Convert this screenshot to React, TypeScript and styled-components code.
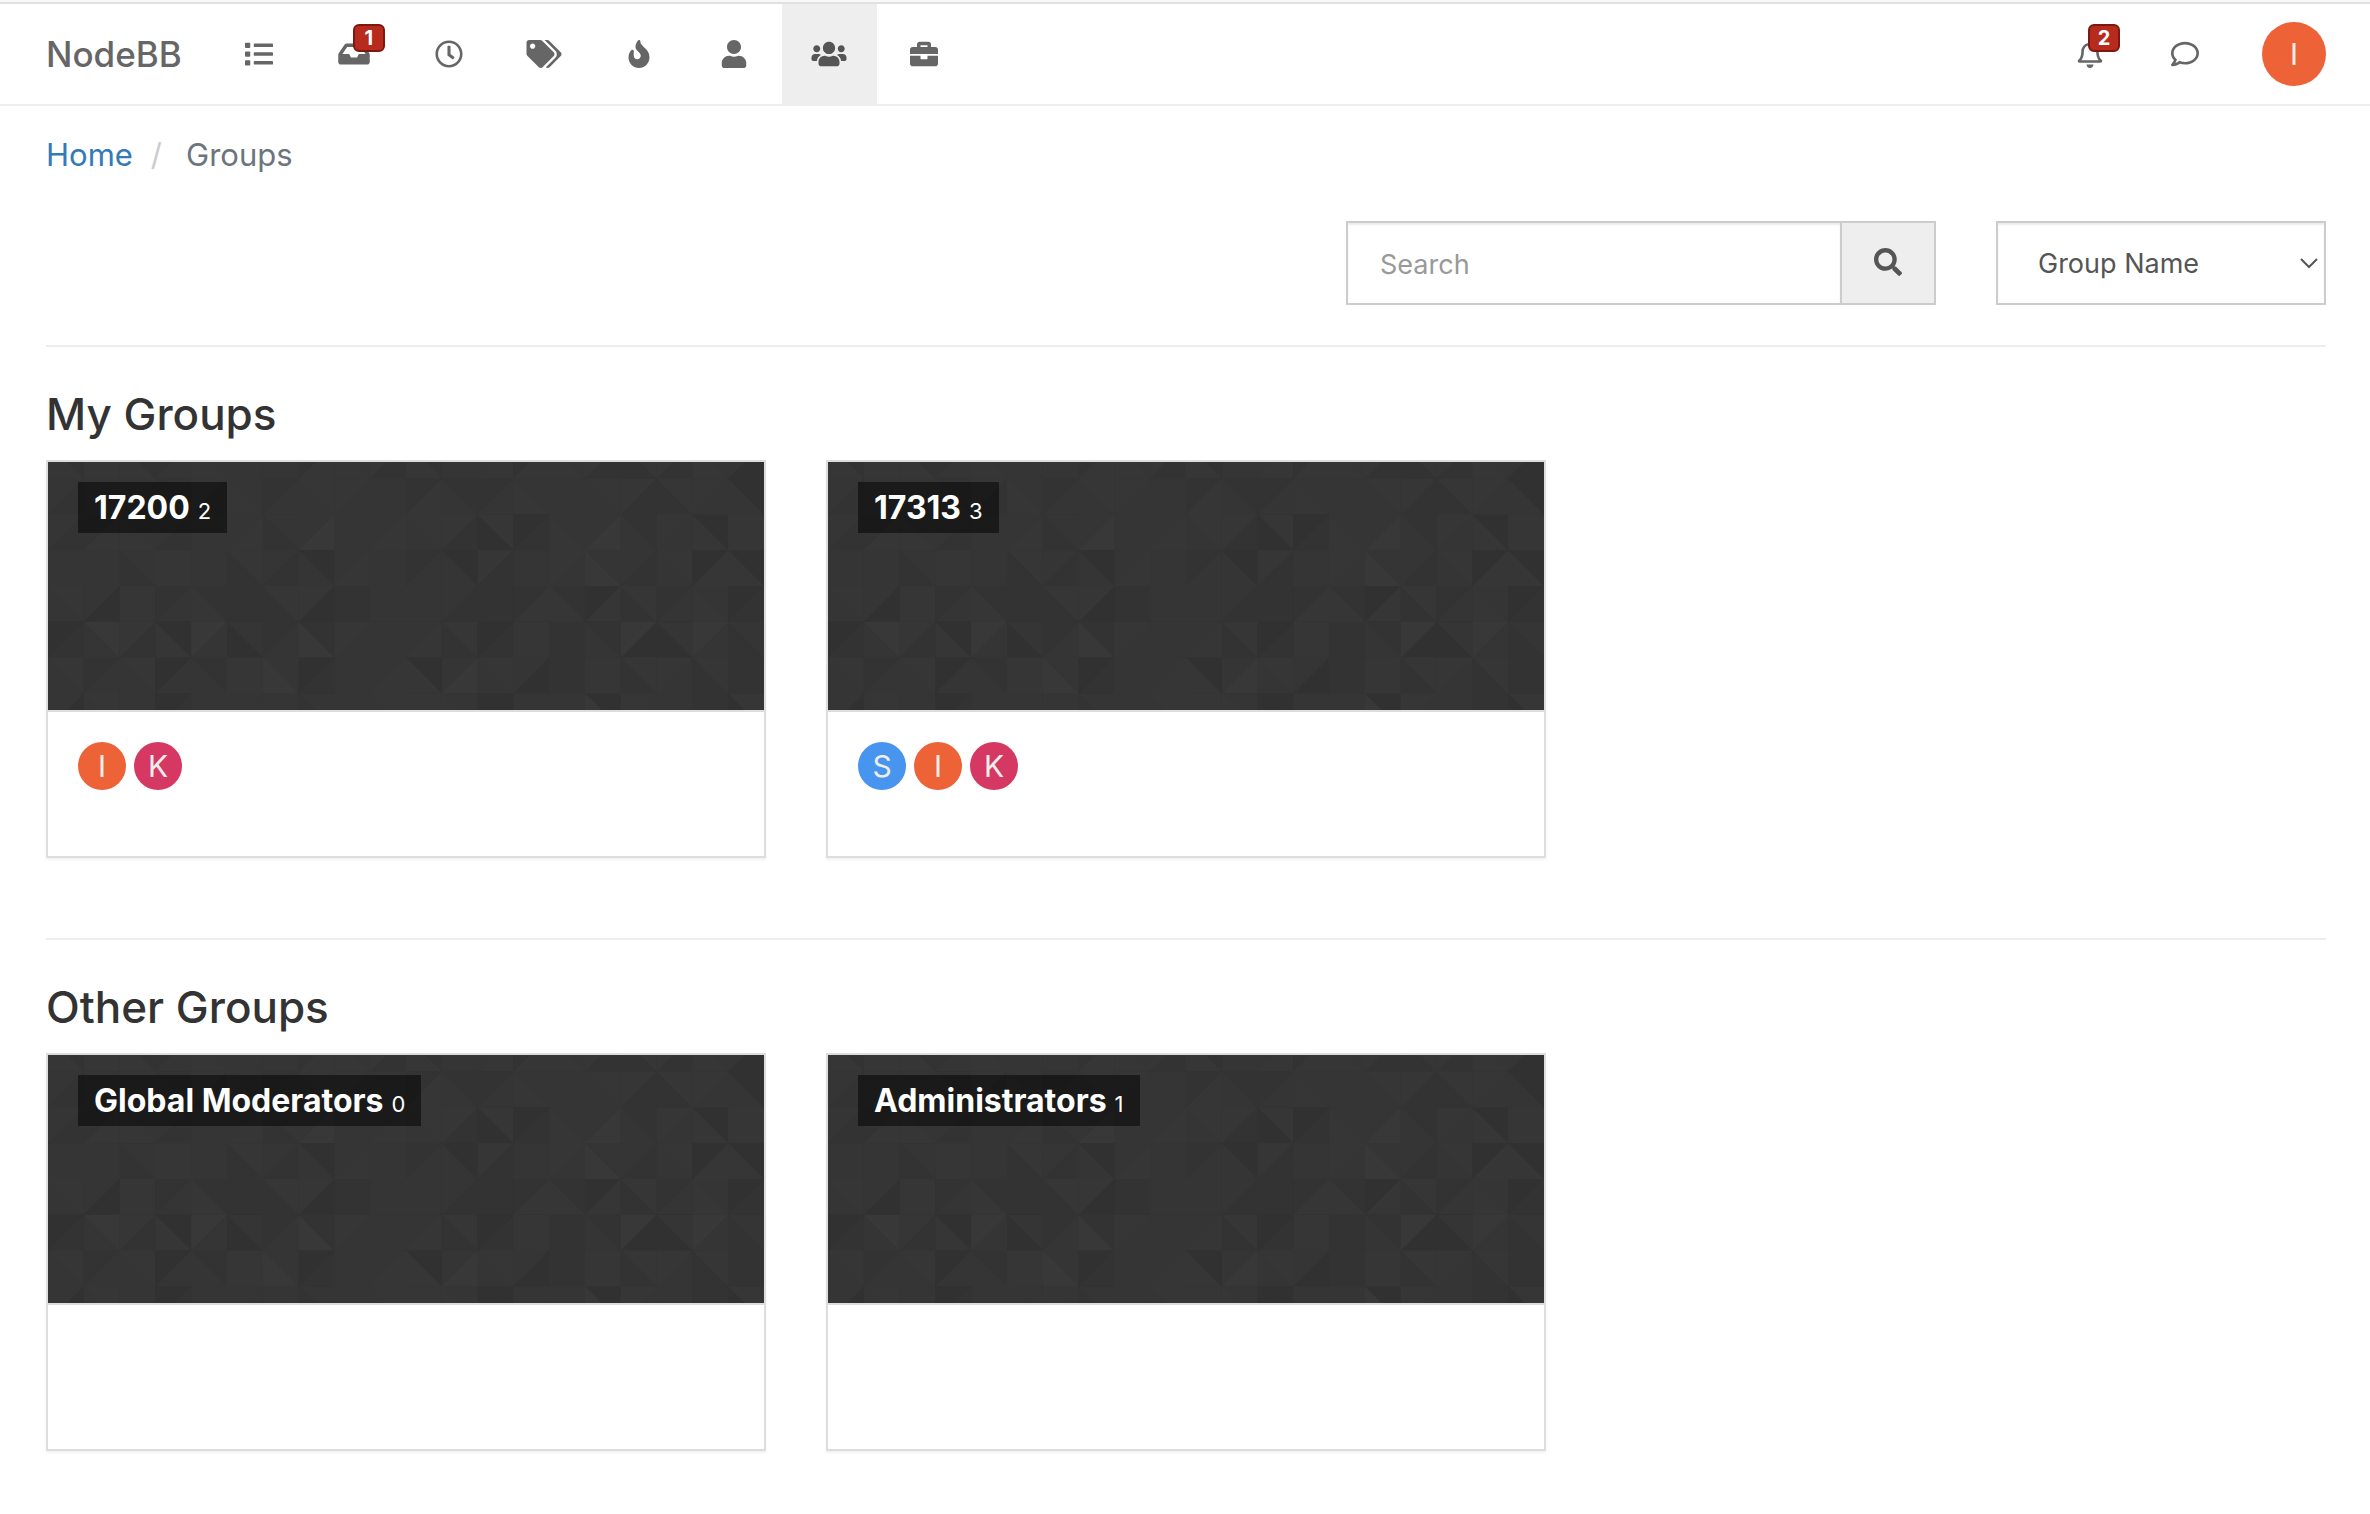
import React from "react";
import styled, { createGlobalStyle } from "styled-components";
import type { IconType } from "react-icons";
import {
  FaBriefcase,
  FaFire,
  FaInbox,
  FaList,
  FaRegBell,
  FaRegClock,
  FaRegComment,
  FaSearch,
  FaTags,
  FaUser,
  FaUsers,
} from "react-icons/fa";

const GlobalStyle = createGlobalStyle`
  *, *::before, *::after {
    box-sizing: border-box;
  }

  body {
    margin: 0;
    background: #fff;
    color: #333;
    font-family: Inter, "Liberation Sans", sans-serif;
    font-size: 27px;
    line-height: 40px;
  }

  button, input, select {
    font: inherit;
  }
`;

const Header = styled.header`
  border-top: 2px solid #f8f8f8;
`;

const Navbar = styled.nav`
  display: flex;
  justify-content: space-between;
  height: 104px;
  padding: 0 44px 0 16px;
  border-top: 2px solid #e1e1e1;
  border-bottom: 2px solid #eee;
`;

const NavGroup = styled.div`
  display: flex;
  align-items: center;
`;

const Brand = styled.a`
  padding: 0 30px;
  color: #666;
  font-size: 35px;
  font-weight: 500;
  text-decoration: none;
`;

const NavList = styled.ul`
  display: flex;
  height: 100%;
  margin: 0;
  padding: 0;
  list-style: none;
`;

const NavLink = styled.a<{ $active?: boolean }>`
  position: relative;
  display: flex;
  align-items: center;
  justify-content: center;
  width: 95px;
  height: 100%;
  background: ${(p) => (p.$active ? "#eee" : "transparent")};
  color: ${(p) => (p.$active ? "#555" : "#666")};

  svg {
    width: 36px;
    height: 28px;
  }
`;

const Badge = styled.span`
  position: absolute;
  top: 20px;
  left: 46px;
  width: 32px;
  height: 28px;
  border: 2px solid #7d1710;
  border-radius: 6px;
  background: #b72b1e;
  color: #fff;
  font-size: 20px;
  font-weight: 700;
  line-height: 24px;
  text-align: center;
`;

const AvatarButton = styled.button`
  margin: 0 0 0 30px;
  padding: 0;
  border: 0;
  background: none;
  cursor: pointer;
`;

const Avatar = styled.span<{ $color: string; $size: number }>`
  display: flex;
  align-items: center;
  justify-content: center;
  width: ${(p) => p.$size}px;
  height: ${(p) => p.$size}px;
  border-radius: 50%;
  background: ${(p) => p.$color};
  color: #eee;
  font-size: 30px;
  line-height: 40px;
`;

const Content = styled.main`
  padding: 0 44px 0 46px;
`;

const Breadcrumb = styled.ol`
  display: flex;
  margin: 0;
  padding: 29px 0 27px;
  list-style: none;
  font-size: 31px;
`;

const Crumb = styled.li`
  color: #6c757d;

  & + &::before {
    content: "/";
    padding: 0 24px 0 18px;
    color: #ccc;
  }

  a {
    color: #337ab7;
    text-decoration: none;
  }
`;

const Toolbar = styled.form`
  display: flex;
  justify-content: flex-end;
  gap: 60px;
  padding: 19px 0 40px;
`;

const SearchGroup = styled.div`
  display: flex;
  width: 590px;
`;

const SearchInput = styled.input`
  flex: 1;
  min-width: 0;
  height: 84px;
  padding: 2px 32px 0;
  border: 2px solid #ccc;
  border-right: 0;
  border-radius: 0;
  box-shadow: inset 0 2px 2px rgba(0, 0, 0, 0.075);
  color: #555;

  &::placeholder {
    color: #999;
    opacity: 1;
  }
`;

const SearchButton = styled.button`
  display: flex;
  align-items: center;
  justify-content: center;
  width: 96px;
  padding: 0 0 2px;
  border: 2px solid #ccc;
  background: #eee;
  color: #555;

  svg {
    width: 28px;
    height: 28px;
  }
`;

const SortBox = styled.div`
  position: relative;
  width: 330px;

  svg {
    position: absolute;
    top: 36px;
    right: 8px;
    pointer-events: none;
  }
`;

const SortSelect = styled.select`
  width: 100%;
  height: 84px;
  padding: 2px 40px 0;
  border: 2px solid #ccc;
  border-radius: 0;
  background: #fff;
  box-shadow: inset 0 2px 2px rgba(0, 0, 0, 0.075);
  color: #555;
  appearance: none;
`;

const Section = styled.section`
  padding-bottom: 80px;
  border-top: 2px solid #eee;

  &:last-child {
    padding-bottom: 60px;
  }
`;

const Heading = styled.h2`
  margin: 0;
  padding: 41px 0 20px;
  font-size: 44px;
  font-weight: 500;
  line-height: 52px;
`;

const CardGrid = styled.div`
  display: grid;
  grid-template-columns: repeat(3, 1fr);
  gap: 60px;
`;

const Card = styled.article`
  border: 2px solid #ddd;
  background: #fff;
  box-shadow: 0 2px 2px rgba(0, 0, 0, 0.05);
`;

const Cover = styled.a`
  position: relative;
  display: flex;
  align-items: flex-start;
  height: 250px;
  padding: 20px 30px;
  border-bottom: 2px solid #ddd;
  text-decoration: none;
`;

const CoverArt = styled.svg`
  position: absolute;
  inset: 0;
  width: 100%;
  height: 100%;
`;

const GroupLabel = styled.h3`
  position: relative;
  display: flex;
  align-items: baseline;
  gap: 8px;
  margin: 0;
  padding: 6px 16px 5px;
  background: rgba(0, 0, 0, 0.5);
  color: #fff;
  font-size: 32px;
  font-weight: 700;
  line-height: 40px;

  small {
    font-size: 22px;
    font-weight: 400;
    line-height: 24px;
  }
`;

const MemberList = styled.ul`
  display: flex;
  gap: 8px;
  height: 144px;
  margin: 0;
  padding: 30px;
  list-style: none;
`;

const SHADES = ["#313131", "#333333", "#353535", "#363636", "#383838"];

/* Each tile is a diagonal and the shades of its left and right halves. */
const TILES = [
  "\\31 \\33 \\31 /12 \\32 \\22 \\22 /13 \\32 /31 \\31 /22 /23 /13 \\32 /31 \\13 /31 \\32 /20",
  "/21 /22 /22 \\21 /31 \\32 /12 \\23 /32 \\22 /13 \\21 /12 \\32 /22 \\23 /31 \\13 /32 \\20",
  "/21 /13 \\32 /21 /22 /23 \\12 /24 /22 /23 \\23 /31 \\03 /01 \\32 /24 \\21 /32 \\30 /33",
  "\\22 \\22 \\12 /33 \\22 \\13 /21 \\20 /23 \\22 /12 \\20 /31 /22 /32 \\42 /21 \\23 /03 \\30",
  "\\23 /20 /33 /12 \\31 /11 \\13 /30 \\11 /22 /22 /21 /11 /13 \\31 /03 \\13 /12 \\32 /01",
  "/01 \\24 /31 \\30 /42 \\02 /12 \\41 /32 \\22 /23 \\13 /01 \\33 /11 \\21 /40 \\02 /42 \\12",
  "\\23 /12 \\23 /02 \\21 /33 \\42 /01 /22 /23 \\30 /24 \\23 /20 /11 /33 \\13 /32 \\13 /11",
  "/20 \\23 /22 /01 /22 /22 /22 \\12 /22 \\23 /33 \\32 /00 /22 /22 \\40 /32 /22 \\11 \\03",
].map((row) => row.split(" "));

function TrianglePattern() {
  return (
    <CoverArt viewBox="0 0 20 8" preserveAspectRatio="xMidYMid slice" aria-hidden="true">
      <rect width="20" height="8" fill={SHADES[2]} />
      {TILES.map((row, y) =>
        row.map((tile, x) => {
          const half =
            tile[0] === "/"
              ? `M${x + 1} ${y}V${y + 1}H${x}Z`
              : `M${x} ${y}H${x + 1}V${y + 1}Z`;
          return (
            <g key={`${x}-${y}`}>
              <rect x={x} y={y} width="1" height="1" fill={SHADES[Number(tile[1])]} />
              <path d={half} fill={SHADES[Number(tile[2])]} />
            </g>
          );
        }),
      )}
    </CoverArt>
  );
}

const MEMBER_COLORS: Record<string, string> = {
  I: "#ed6337",
  K: "#d63864",
  S: "#4795ee",
};

interface NavEntry {
  label: string;
  icon: IconType;
  badge?: number;
  active?: boolean;
}

const MAIN_NAV: NavEntry[] = [
  { label: "Categories", icon: FaList },
  { label: "Unread", icon: FaInbox, badge: 1 },
  { label: "Recent", icon: FaRegClock },
  { label: "Tags", icon: FaTags },
  { label: "Popular", icon: FaFire },
  { label: "Users", icon: FaUser },
  { label: "Groups", icon: FaUsers, active: true },
  { label: "Admin", icon: FaBriefcase },
];

const USER_NAV: NavEntry[] = [
  { label: "Notifications", icon: FaRegBell, badge: 2 },
  { label: "Chats", icon: FaRegComment },
];

interface Group {
  name: string;
  count: number;
  members: string[];
}

const MY_GROUPS: Group[] = [
  { name: "17200", count: 2, members: ["I", "K"] },
  { name: "17313", count: 3, members: ["S", "I", "K"] },
];

const OTHER_GROUPS: Group[] = [
  { name: "Global Moderators", count: 0, members: [] },
  { name: "Administrators", count: 1, members: [] },
];

function NavItems({ entries }: { entries: NavEntry[] }) {
  return (
    <NavList>
      {entries.map(({ label, icon: Icon, badge, active }) => (
        <li key={label}>
          <NavLink href="#" aria-label={label} $active={active}>
            <Icon />
            {badge !== undefined && <Badge>{badge}</Badge>}
          </NavLink>
        </li>
      ))}
    </NavList>
  );
}

function GroupSection({ title, groups }: { title: string; groups: Group[] }) {
  return (
    <Section>
      <Heading>{title}</Heading>
      <CardGrid>
        {groups.map((group) => (
          <Card key={group.name}>
            <Cover href="#">
              <TrianglePattern />
              <GroupLabel>
                {group.name}
                <small>{group.count}</small>
              </GroupLabel>
            </Cover>
            <MemberList>
              {group.members.map((m) => (
                <li key={m}>
                  <Avatar $color={MEMBER_COLORS[m]} $size={48}>
                    {m}
                  </Avatar>
                </li>
              ))}
            </MemberList>
          </Card>
        ))}
      </CardGrid>
    </Section>
  );
}

export default function App() {
  return (
    <>
      <GlobalStyle />
      <Header>
        <Navbar>
          <NavGroup>
            <Brand href="#">NodeBB</Brand>
            <NavItems entries={MAIN_NAV} />
          </NavGroup>
          <NavGroup>
            <NavItems entries={USER_NAV} />
            <AvatarButton type="button" aria-label="Account menu">
              <Avatar $color={MEMBER_COLORS.I} $size={64}>
                I
              </Avatar>
            </AvatarButton>
          </NavGroup>
        </Navbar>
      </Header>
      <Content>
        <Breadcrumb>
          <Crumb>
            <a href="#">Home</a>
          </Crumb>
          <Crumb>Groups</Crumb>
        </Breadcrumb>
        <Toolbar onSubmit={(e) => e.preventDefault()}>
          <SearchGroup>
            <SearchInput type="text" placeholder="Search" aria-label="Search" />
            <SearchButton type="submit" aria-label="Search groups">
              <FaSearch />
            </SearchButton>
          </SearchGroup>
          <SortBox>
            <SortSelect aria-label="Sort by" defaultValue="alpha">
              <option value="alpha">Group Name</option>
              <option value="count">Member Count</option>
              <option value="date">Creation Date</option>
            </SortSelect>
            <svg width="18" height="12" viewBox="0 0 18 12" fill="none" aria-hidden="true">
              <path d="M1 2L9 10L17 2" stroke="#555" strokeWidth="2" />
            </svg>
          </SortBox>
        </Toolbar>
        <GroupSection title="My Groups" groups={MY_GROUPS} />
        <GroupSection title="Other Groups" groups={OTHER_GROUPS} />
      </Content>
    </>
  );
}
